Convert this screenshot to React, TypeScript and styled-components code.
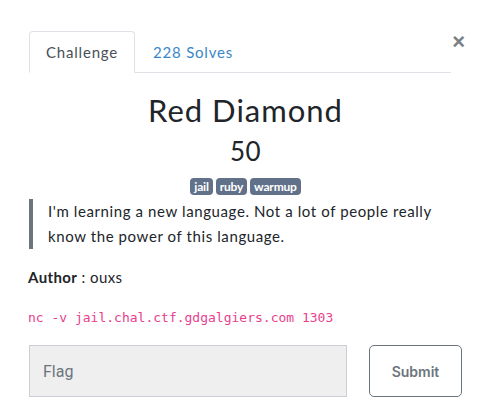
import React from "react";
import styled, { createGlobalStyle } from "styled-components";

const Global = createGlobalStyle`
  html, body { margin: 0; padding: 0; background: #fff; }
  body { font-family: Lato, "Open Sans", sans-serif; color: #212529; }
  * { box-sizing: border-box; }
`;

const Modal = styled.div`
  width: 491px;
  height: 420px;
  padding: 31px 29px 0 29px;
  position: relative;
`;

const Close = styled.button`
  position: absolute;
  top: 31px;
  right: 26px;
  border: none;
  background: none;
  padding: 0;
  font-size: 22px;
  line-height: 22px;
  font-weight: 700;
  color: #7a7f85;
  font-family: "Liberation Sans", Arial, sans-serif;
  cursor: pointer;
`;

const TabBar = styled.div`
  display: flex;
  align-items: flex-start;
  width: 422px;
  border-bottom: 1px solid #dee2e6;
`;

const Tab = styled.div<{ $active?: boolean }>`
  height: ${(p) => (p.$active ? "42px" : "41px")};
  padding: 0 ${(p) => (p.$active ? "16px" : "18px")};
  display: flex;
  align-items: center;
  font-size: 15px;
  letter-spacing: 0.8px;
  margin-bottom: ${(p) => (p.$active ? "-1px" : "0")};
  border: ${(p) => (p.$active ? "1px solid #dee2e6" : "none")};
  border-bottom-color: #fff;
  border-radius: 4px 4px 0 0;
  color: ${(p) => (p.$active ? "#495057" : "#3a86c8")};
  background: ${(p) => (p.$active ? "#fff" : "transparent")};
`;

const Content = styled.div`
  display: flex;
  flex-direction: column;
  align-items: center;
  padding-top: 18px;
`;

const Title = styled.h2`
  margin: 0;
  font-size: 31px;
  font-weight: 400;
  line-height: 38px;
  letter-spacing: 1px;
  color: #212529;
`;

const Value = styled.h4`
  margin: 6px 0 0 0;
  font-size: 26px;
  font-weight: 400;
  line-height: 32px;
  letter-spacing: 0.5px;
  color: #212529;
`;

const Tags = styled.div`
  display: flex;
  gap: 3px;
  margin-top: 11px;
`;

const Badge = styled.span`
  background: #617189;
  color: #fff;
  font-size: 12px;
  font-weight: 700;
  padding: 0 4px;
  height: 17px;
  line-height: 17px;
  border-radius: 4px;
  letter-spacing: -0.2px;
`;

const Body = styled.div`
  width: 100%;
`;

const Quote = styled.blockquote`
  margin: 4px 0 0 0;
  border-left: 4px solid #6c757d;
  padding: 0 0 0 15px;
  font-size: 15px;
  line-height: 25px;
  letter-spacing: 0.6px;
  color: #212529;
`;

const Author = styled.p`
  margin: 18px 0 0 -1px;
  font-size: 15px;
  line-height: 20px;
  letter-spacing: 0.4px;
  color: #212529;
`;

const Strong = styled.span`
  font-weight: 700;
`;

const Code = styled.p`
  margin: 22px 0 0 -1px;
  font-family: "DejaVu Sans Mono", "Liberation Mono", monospace;
  font-size: 13px;
  line-height: 18px;
  color: #e83e8c;
`;

const FormRow = styled.div`
  display: flex;
  justify-content: space-between;
  margin-top: 18px;
`;

const Input = styled.input`
  width: 318px;
  height: 52px;
  background: #efefef;
  border: 1px solid #ccd0d6;
  padding: 0 13px;
  font-size: 16px;
  font-family: Roboto, "Noto Sans", sans-serif;
  color: #495057;
  &::placeholder { color: #6c757d; }
`;

const Submit = styled.button`
  width: 93px;
  height: 52px;
  background: #fff;
  border: 1px solid #6c757d;
  border-radius: 5px;
  font-size: 14px;
  font-weight: 600;
  font-family: Inter, Roboto, sans-serif;
  color: #6c757d;
`;

export default function App() {
  return (
    <>
      <Global />
      <Modal>
        <Close>×</Close>
        <TabBar>
          <Tab $active>Challenge</Tab>
          <Tab>228 Solves</Tab>
        </TabBar>
        <Content>
          <Title>Red Diamond</Title>
          <Value>50</Value>
          <Tags>
            <Badge>jail</Badge>
            <Badge>ruby</Badge>
            <Badge>warmup</Badge>
          </Tags>
          <Body>
            <Quote>
              I'm learning a new language. Not a lot of people really know the power of this language.
            </Quote>
            <Author>
              <Strong>Author</Strong> : ouxs
            </Author>
            <Code>nc -v jail.chal.ctf.gdgalgiers.com 1303</Code>
            <FormRow>
              <Input placeholder="Flag" />
              <Submit>Submit</Submit>
            </FormRow>
          </Body>
        </Content>
      </Modal>
    </>
  );
}
